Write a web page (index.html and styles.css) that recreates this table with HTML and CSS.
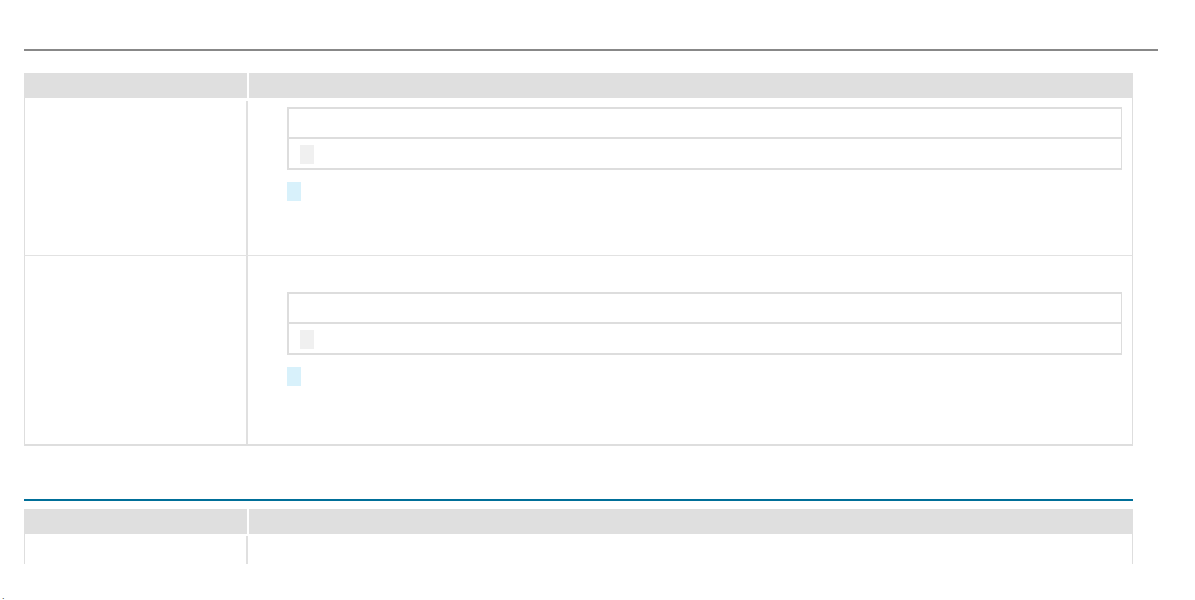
FILE: index.html
```html
<!DOCTYPE html>
<html>
<head>
<meta charset="utf-8">
<link rel="stylesheet" href="styles.css">
</head>
<body>
<div class="page">
  <div class="rule-top"></div>
  <div class="table first-table">
    <div class="thead">
      <div class="th"></div>
      <div class="th"></div>
    </div>
    <div class="row row-a">
      <div class="cell-left"></div>
      <div class="cell-right pad-a">
        <div class="box">
          <div class="box-head"></div>
          <div class="box-body"><span class="chip-gray"></span></div>
        </div>
        <span class="chip-blue"></span>
      </div>
    </div>
    <div class="row row-b">
      <div class="cell-left"></div>
      <div class="cell-right pad-b">
        <div class="box">
          <div class="box-head"></div>
          <div class="box-body"><span class="chip-gray"></span></div>
        </div>
        <span class="chip-blue"></span>
      </div>
    </div>
  </div>
  <div class="rule-blue"></div>
  <div class="table second-table">
    <div class="thead">
      <div class="th"></div>
      <div class="th"></div>
    </div>
    <div class="row row-c">
      <div class="cell-left"></div>
      <div class="cell-right"></div>
    </div>
  </div>
</div>
<div class="foot">.</div>
</body>
</html>
```

FILE: styles.css
```css
html, body {
  margin: 0;
  padding: 0;
  background: #ffffff;
  font-family: "Liberation Sans", Arial, sans-serif;
}

.page {
  width: 1134px;
  margin-left: 24px;
}

.rule-top {
  margin-top: 49px;
  height: 2px;
  background: #888888;
}

.table {
  width: 1109px;
}

.first-table {
  margin-top: 22px;
}

.thead {
  display: grid;
  grid-template-columns: 223px 1fr;
  column-gap: 2px;
  height: 25px;
}

.th {
  background: #dfdfdf;
}

.row {
  display: grid;
  grid-template-columns: 223px 1fr;
  border-left: 1px solid #dedede;
  border-right: 1px solid #dedede;
  box-sizing: border-box;
}

.cell-left {
  border-right: 2px solid #e0e0e0;
}

.row-a {
  height: 158px;
  border-bottom: 1px solid #e2e2e2;
}

.row-a .cell-left {
  margin-top: 3px;
}

.row-b {
  height: 190px;
  border-bottom: 2px solid #dedede;
}

.row-c {
  height: 30px;
}

.row-c .cell-left {
  margin-top: 2px;
}

.cell-right {
  padding-left: 39px;
  padding-right: 10px;
  display: flex;
  flex-direction: column;
  align-items: flex-start;
}

.pad-a {
  padding-top: 9px;
}

.pad-b {
  padding-top: 36px;
}

.box {
  align-self: stretch;
  border: 2px solid #dddddd;
  border-right-width: 1px;
}

.box-head {
  height: 28px;
  border-bottom: 2px solid #dddddd;
}

.box-body {
  height: 29px;
  padding-left: 11px;
  padding-top: 6px;
  box-sizing: border-box;
}

.chip-gray {
  display: block;
  width: 14px;
  height: 19px;
  background: #f0f0f0;
}

.chip-blue {
  display: block;
  width: 14px;
  height: 19px;
  margin-top: 12px;
  background: #d8f1fb;
}

.rule-blue {
  margin-top: 53px;
  width: 1109px;
  height: 2px;
  background: #006f99;
}

.second-table {
  margin-top: 8px;
}

.foot {
  margin-top: 27px;
  margin-left: 2px;
  font-size: 9px;
  line-height: 10px;
  color: #333333;
}
```
